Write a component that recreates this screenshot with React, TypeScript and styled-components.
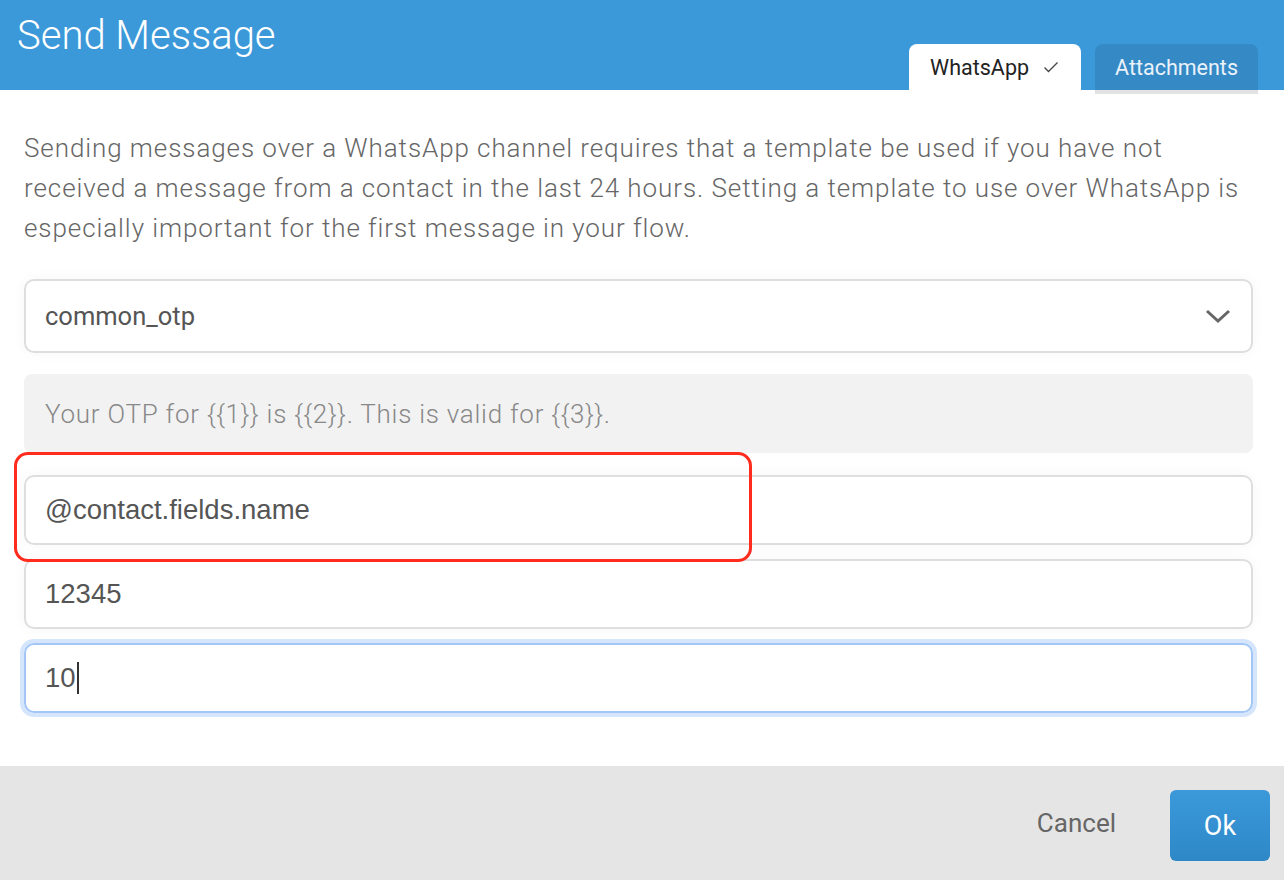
import React from "react";
import styled, { createGlobalStyle } from "styled-components";

const Global = createGlobalStyle`
  html, body { margin: 0; padding: 0; background: #fff; }
  body { font-family: Roboto, "Noto Sans", sans-serif; }
  * { box-sizing: border-box; }
`;

const Page = styled.div`
  width: 1284px;
  height: 880px;
  display: flex;
  flex-direction: column;
  overflow: hidden;
`;

const Header = styled.header`
  flex-shrink: 0;
  height: 90px;
  background: #3b99d9;
  display: flex;
  align-items: flex-start;
  justify-content: space-between;
  padding: 0 26px 0 17px;
  position: relative;
  z-index: 1;
`;

const Title = styled.h1`
  margin: 0;
  padding-top: 13px;
  font-family: Roboto, sans-serif;
  font-weight: 300;
  font-size: 40px;
  line-height: 46px;
  color: #fff;
`;

const Tabs = styled.div`
  display: flex;
  gap: 14px;
  align-self: flex-end;
`;

const Tab = styled.div<{ $active?: boolean }>`
  height: ${(p) => (p.$active ? "46px" : "50px")};
  margin-bottom: ${(p) => (p.$active ? "0" : "-4px")};
  padding: ${(p) => (p.$active ? "0 22px 0 21px" : "0 20px")};
  border-radius: 8px 8px 0 0;
  background: ${(p) => (p.$active ? "#fff" : "#3589c5")};
  border-bottom: ${(p) => (p.$active ? "none" : "4px solid #e2e2e2")};
  color: ${(p) => (p.$active ? "#222" : "#eaf2fa")};
  font-family: Roboto, sans-serif;
  font-weight: 400;
  font-size: 21.5px;
  display: flex;
  align-items: center;
  gap: 14px;
`;

const Body = styled.main`
  flex: 1;
  display: flex;
  flex-direction: column;
  padding: 38px 31px 0 24px;
`;

const Intro = styled.p`
  margin: 0 0 31px;
  width: 1236px;
  font-family: Roboto, sans-serif;
  font-weight: 300;
  font-size: 26px;
  letter-spacing: 0.92px;
  line-height: 40px;
  color: #666;
`;

const Select = styled.div`
  height: 74px;
  border: 2px solid #dedede;
  border-radius: 10px;
  box-shadow: 0 0 14px rgba(0, 0, 0, 0.04);
  display: flex;
  align-items: center;
  justify-content: space-between;
  padding: 0 20px 0 19px;
  font-family: Roboto, sans-serif;
  font-weight: 400;
  font-size: 25.5px;
  color: #555;
  margin-bottom: 21px;
`;

const Preview = styled.div`
  height: 79px;
  border-radius: 8px;
  background: #f2f2f2;
  display: flex;
  align-items: center;
  padding: 0 21px;
  font-family: Roboto, sans-serif;
  font-weight: 300;
  font-size: 26px;
  letter-spacing: 0.75px;
  color: #888;
  margin-bottom: 22px;
`;

const Fields = styled.div`
  display: flex;
  flex-direction: column;
  gap: 14px;
  position: relative;
`;

const Field = styled.div<{ $focused?: boolean }>`
  height: 70px;
  border: 2px solid ${(p) => (p.$focused ? "#a2c7f7" : "#dedede")};
  border-radius: 10px;
  box-shadow: ${(p) =>
    p.$focused ? "0 0 0 4px #d4e5fc" : "0 0 14px rgba(0, 0, 0, 0.04)"};
  display: flex;
  align-items: center;
  padding: 0 19px;
  font-family: "Liberation Sans", Arial, sans-serif;
  font-size: 27.5px;
  color: #555;
`;

const Caret = styled.span`
  display: inline-block;
  width: 2px;
  height: 32px;
  background: #333;
  margin-left: 1px;
`;

const Highlight = styled.div`
  position: absolute;
  left: -10px;
  top: -23px;
  width: 738px;
  height: 110px;
  border: 3px solid #ff2b1c;
  border-radius: 14px;
  pointer-events: none;
`;

const Footer = styled.footer`
  flex-shrink: 0;
  height: 114px;
  background: #e5e5e5;
  display: flex;
  align-items: center;
  justify-content: flex-end;
  padding: 0 14px 0 0;
  gap: 54px;
`;

const Cancel = styled.span`
  font-family: Roboto, sans-serif;
  font-weight: 400;
  font-size: 26px;
  color: #666;
`;

const Ok = styled.button`
  width: 100px;
  height: 71px;
  border: none;
  border-radius: 6px;
  background: linear-gradient(#3b99da, #2e88c8);
  color: #fff;
  font-family: Roboto, sans-serif;
  font-weight: 400;
  font-size: 27px;
  margin-top: 5px;
`;

export default function App() {
  return (
    <>
      <Global />
      <Page>
        <Header>
          <Title>Send Message</Title>
          <Tabs>
            <Tab $active>
              WhatsApp
              <svg width="16" height="12" viewBox="0 0 16 12">
                <path d="M1.5 6.5 L5.5 10.5 L14.5 1.5" fill="none" stroke="#444" strokeWidth="1.3" />
              </svg>
            </Tab>
            <Tab>Attachments</Tab>
          </Tabs>
        </Header>
        <Body>
          <Intro>
            Sending messages over a WhatsApp channel requires that a template be used if you have not
            received a message from a contact in the last 24 hours. Setting a template to use over
            WhatsApp is especially important for the first message in your flow.
          </Intro>
          <Select>
            common_otp
            <svg width="26" height="16" viewBox="0 0 26 16">
              <path d="M2 3 L13 13 L24 3" fill="none" stroke="#666" strokeWidth="3" />
            </svg>
          </Select>
          <Preview>Your OTP for {"{{1}}"} is {"{{2}}"}. This is valid for {"{{3}}"}.</Preview>
          <Fields>
            <Field>@contact.fields.name</Field>
            <Field>12345</Field>
            <Field $focused>
              10<Caret />
            </Field>
            <Highlight />
          </Fields>
        </Body>
        <Footer>
          <Cancel>Cancel</Cancel>
          <Ok>Ok</Ok>
        </Footer>
      </Page>
    </>
  );
}
